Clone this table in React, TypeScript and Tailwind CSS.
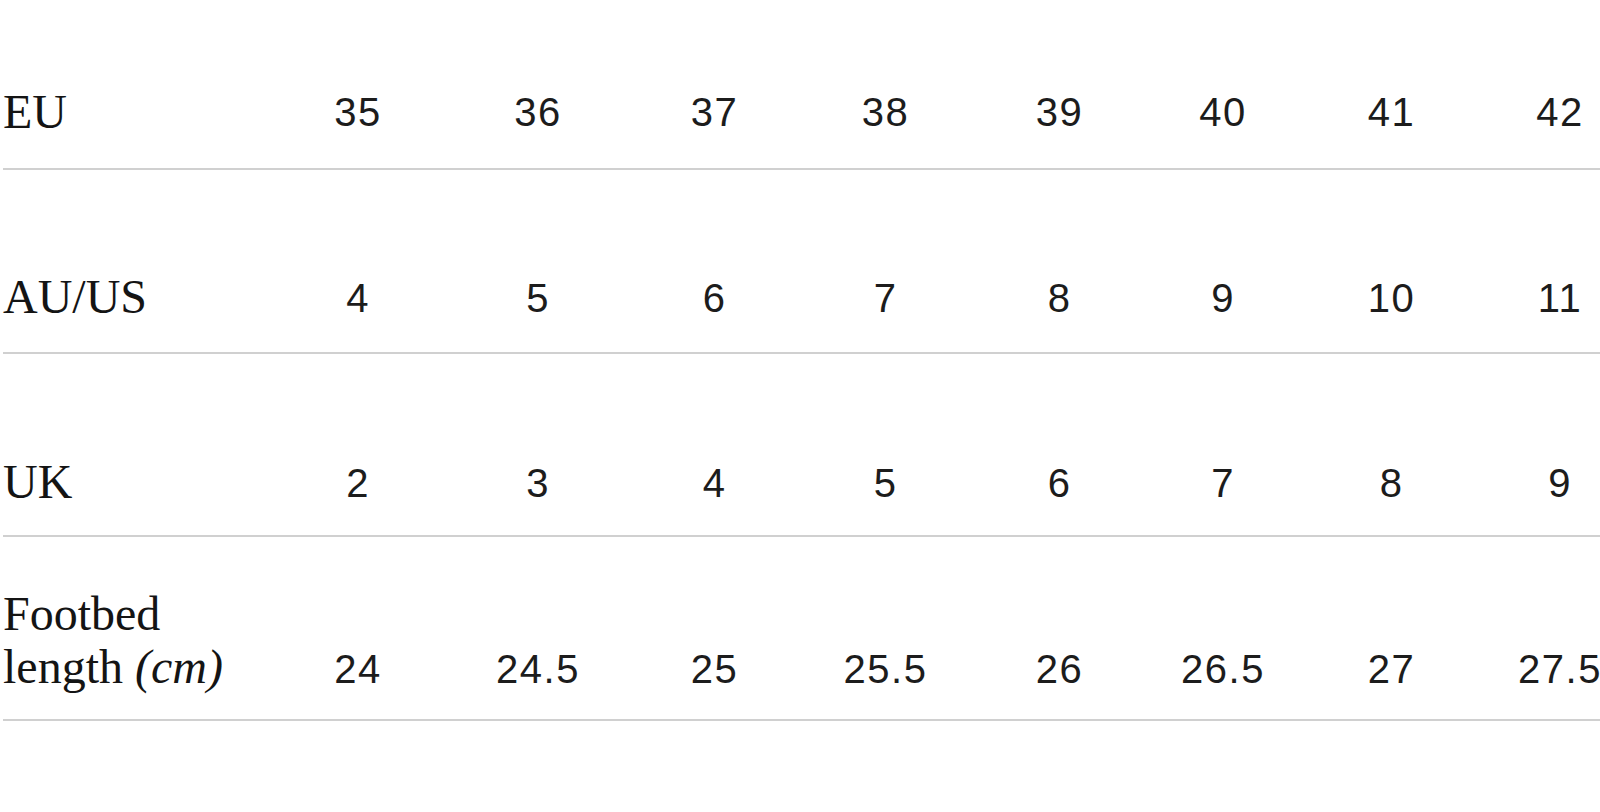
import React from "react";

type Row = {
  label: React.ReactNode;
  values: string[];
  rowClass: string;
  labelPb: string;
  numPb: string;
};

const rows: Row[] = [
  {
    label: "EU",
    values: ["35", "36", "37", "38", "39", "40", "41", "42"],
    rowClass: "h-[170px]",
    labelPb: "pb-[30px]",
    numPb: "pb-[29px]",
  },
  {
    label: "AU/US",
    values: ["4", "5", "6", "7", "8", "9", "10", "11"],
    rowClass: "h-[184px]",
    labelPb: "pb-[29px]",
    numPb: "pb-[27px]",
  },
  {
    label: "UK",
    values: ["2", "3", "4", "5", "6", "7", "8", "9"],
    rowClass: "h-[183px]",
    labelPb: "pb-[27px]",
    numPb: "pb-[25px]",
  },
  {
    label: (
      <>
        Footbed
        <br />
        length <span className="italic">(cm)</span>
      </>
    ),
    values: ["24", "24.5", "25", "25.5", "26", "26.5", "27", "27.5"],
    rowClass: "h-[184px]",
    labelPb: "pb-[26px]",
    numPb: "pb-[23px]",
  },
];

export default function App() {
  return (
    <div className="w-full h-[812px] overflow-hidden bg-white pl-[3px]">
      <div className="w-[1640px]">
        {rows.map((row, i) => (
          <div
            key={i}
            className={`grid grid-cols-[265px_180px_180px_173px_169px_179px_148px_189px_148px] items-end border-b-2 border-[#d0d0d0] ${row.rowClass}`}
          >
            <div
              className={`text-[48px] leading-[53px] text-[#141414] ${row.labelPb}`}
              style={{ fontFamily: '"Liberation Serif", "Times New Roman", serif' }}
            >
              {row.label}
            </div>
            {row.values.map((v, j) => (
              <div
                key={j}
                className={`text-center text-[40px] leading-[53px] text-[#1c1c1c] tracking-[1.5px] ${row.numPb}`}
                style={{ fontFamily: '"Liberation Sans", Arial, sans-serif' }}
              >
                {v}
              </div>
            ))}
          </div>
        ))}
      </div>
    </div>
  );
}
